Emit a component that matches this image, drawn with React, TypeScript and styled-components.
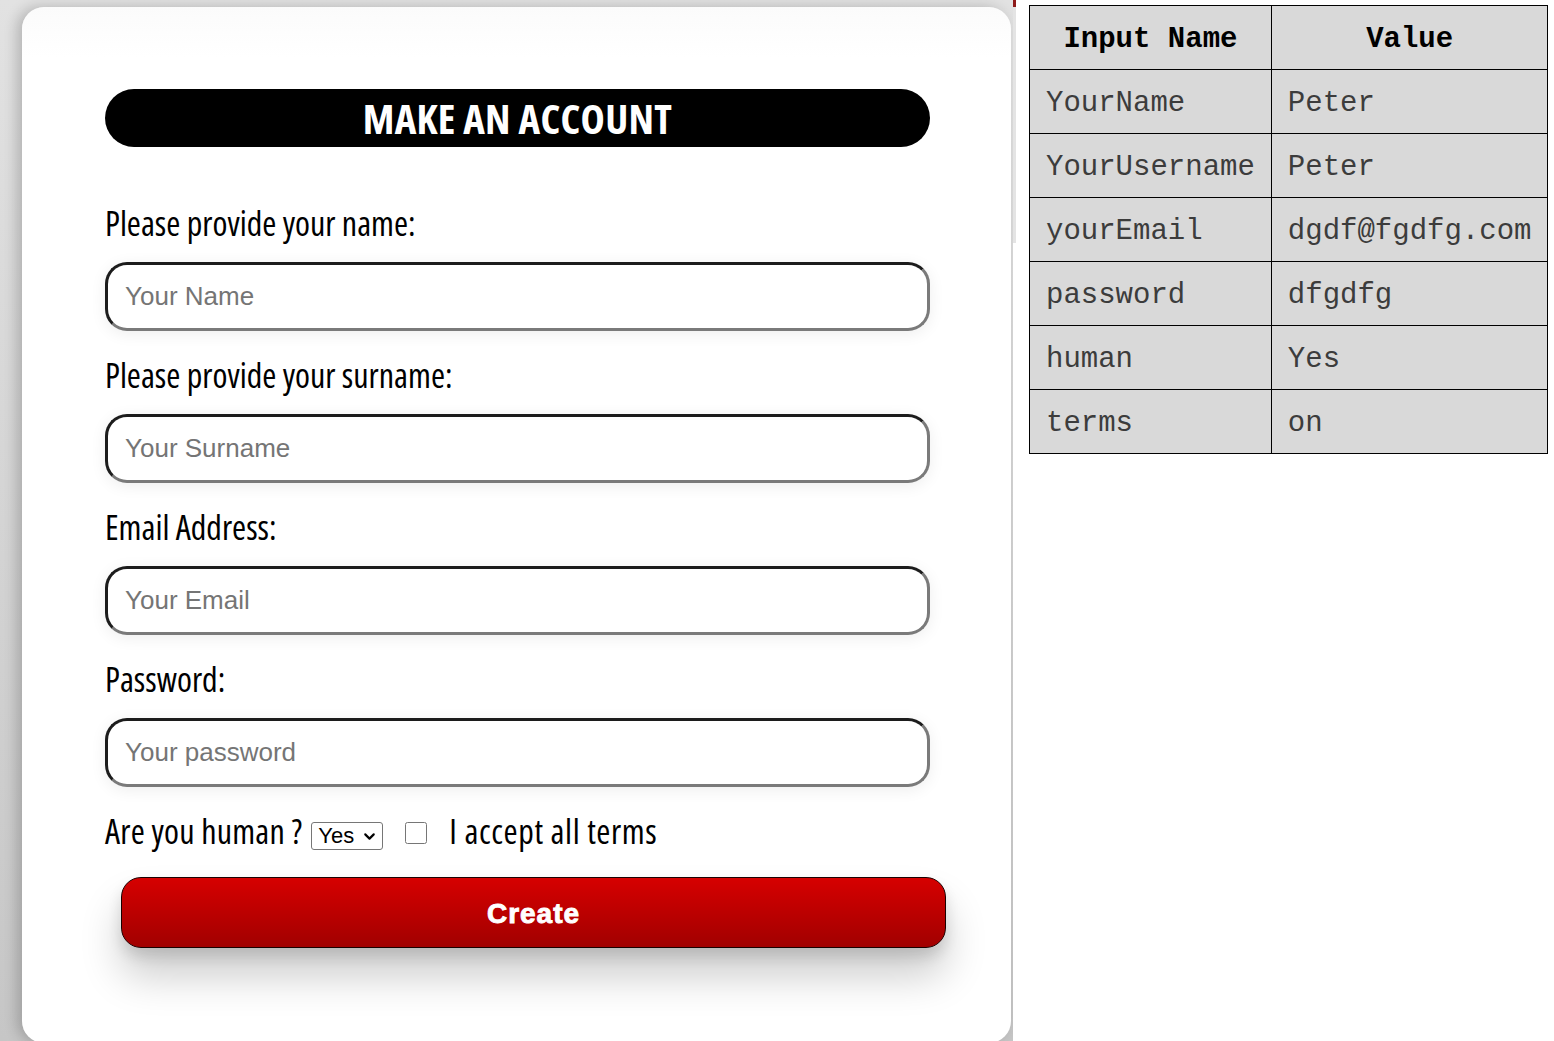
import React from "react";
import styled, { createGlobalStyle } from "styled-components";
import { ChevronDown } from "lucide-react";

const GlobalStyle = createGlobalStyle`
  html, body { margin: 0; padding: 0; background: #fff; }
  body { font-family: "Liberation Sans", Arial, sans-serif; }
  * { box-sizing: border-box; }
`;

const Page = styled.div`
  display: flex;
  align-items: flex-start;
  height: 1041px;
  overflow: hidden;
`;

const FormPane = styled.div`
  position: relative;
  width: 1013px;
  height: 1041px;
  flex-shrink: 0;
  padding: 7px 2px 0 22px;
  background: linear-gradient(to bottom, #e2e2e2, #c6c6c6);
  overflow: hidden;
`;

const Card = styled.form`
  width: 989px;
  height: 1036px;
  padding: 82px 81px 0 83px;
  background: linear-gradient(to bottom, #fbfbfb, #ffffff 50px);
  border-radius: 22px;
  box-shadow: -5px 0 14px rgba(0, 0, 0, 0.2);
  display: flex;
  flex-direction: column;
  align-items: stretch;
`;

const Title = styled.h1`
  margin: 0 0 54px;
  height: 58px;
  border-radius: 29px;
  background: #000;
  color: #fff;
  text-align: center;
  font-family: "Open Sans", sans-serif;
  font-stretch: 75%;
  font-weight: 700;
  font-size: 41px;
  line-height: 58px;
  letter-spacing: 0.3px;
`;

const Label = styled.label`
  display: block;
  margin: 0 0 17px;
  height: 44px;
  font-family: "Open Sans", sans-serif;
  font-stretch: 75%;
  font-weight: 400;
  font-size: 34px;
  line-height: 44px;
  color: #000;
  white-space: nowrap;
`;

const TextInput = styled.input`
  display: block;
  width: 100%;
  height: 69px;
  margin: 0 0 22px;
  padding: 0 17px;
  border: 3px solid;
  border-color: #1c1c1c #7a7a7a #7a7a7a #1c1c1c;
  border-radius: 22px;
  background: #fff;
  box-shadow: 0 3px 16px rgba(0, 0, 0, 0.07);
  font-family: "Liberation Sans", Arial, sans-serif;
  font-size: 26px;
  color: #222;
  outline: none;
  &::placeholder { color: #757575; }
`;

const OptionsRow = styled.div`
  display: flex;
  align-items: center;
  height: 44px;
  margin: 0 0 24px;
  font-family: "Open Sans", sans-serif;
  font-stretch: 75%;
  font-size: 34px;
  line-height: 44px;
  color: #000;
  white-space: nowrap;
`;

const RowText = styled.span<{ $wide?: boolean }>`
  display: inline-block;
  letter-spacing: ${(p) => (p.$wide ? "0.6px" : "0.2px")};
`;

const SelectWrap = styled.span`
  position: relative;
  display: inline-flex;
  margin: 10px 0 0 9px;
`;

const HumanSelect = styled.select`
  appearance: none;
  -webkit-appearance: none;
  width: 72px;
  height: 28px;
  padding: 0 22px 0 6px;
  border: 1px solid #767676;
  border-radius: 3px;
  background: #fff;
  font-family: "Liberation Sans", Arial, sans-serif;
  font-size: 22px;
  line-height: 26px;
  color: #000;
`;

const SelectArrow = styled.span`
  position: absolute;
  right: 5px;
  top: 6px;
  display: flex;
  pointer-events: none;
  color: #000;
`;

const TermsBox = styled.input`
  width: 22px;
  height: 22px;
  margin: 4px 22px 0 22px;
`;

const CreateButton = styled.button`
  width: 825px;
  height: 71px;
  margin: 0 0 0 16px;
  border: 1px solid #1a0000;
  border-radius: 20px;
  background: linear-gradient(to bottom, #d60000, #a10000);
  color: #fff;
  font-family: "Liberation Sans", Arial, sans-serif;
  font-weight: 700;
  font-size: 28px;
  letter-spacing: 1px;
  -webkit-text-stroke: 0.9px #fff;
  padding-top: 3px;
  box-shadow: 0 8px 14px rgba(0, 0, 0, 0.12), 0 28px 42px rgba(0, 0, 0, 0.2);
  cursor: pointer;
`;

const Splitter = styled.div`
  flex-shrink: 0;
  width: 3px;
  height: 243px;
  background: linear-gradient(to bottom, #8e1a1a 0, #8e1a1a 7px, #e4e4e4 7px);
`;

const DataTable = styled.table`
  margin: 5px 0 0 13px;
  border-collapse: collapse;
  border: 1px solid #000;
  background: #d9d9d9;
  font-family: "Liberation Mono", "Courier New", monospace;
  font-size: 29px;
`;

const HeadCell = styled.th`
  height: 64px;
  padding: 4px 16px 0;
  border: 1px solid #000;
  font-weight: 700;
  text-align: center;
  color: #000;
`;

const Cell = styled.td`
  height: 64px;
  padding: 4px 16px 0;
  border: 1px solid #000;
  text-align: left;
  color: #3c3c3c;
  white-space: nowrap;
`;

const rows: [string, string][] = [
  ["YourName", "Peter"],
  ["YourUsername", "Peter"],
  ["yourEmail", "dgdf@fgdfg.com"],
  ["password", "dfgdfg"],
  ["human", "Yes"],
  ["terms", "on"],
];

const fields = [
  { label: "Please provide your name:", placeholder: "Your Name", type: "text" },
  { label: "Please provide your surname:", placeholder: "Your Surname", type: "text" },
  { label: "Email Address:", placeholder: "Your Email", type: "email" },
  { label: "Password:", placeholder: "Your password", type: "password" },
];

export default function App() {
  return (
    <>
      <GlobalStyle />
      <Page>
        <FormPane>
          <Card onSubmit={(e) => e.preventDefault()}>
            <Title>MAKE AN ACCOUNT</Title>
            {fields.map((f) => (
              <React.Fragment key={f.label}>
                <Label>{f.label}</Label>
                <TextInput type={f.type} placeholder={f.placeholder} />
              </React.Fragment>
            ))}
            <OptionsRow>
              <RowText>Are you human ?</RowText>
              <SelectWrap>
                <HumanSelect defaultValue="Yes">
                  <option>Yes</option>
                  <option>No</option>
                </HumanSelect>
                <SelectArrow>
                  <ChevronDown size={17} strokeWidth={3} />
                </SelectArrow>
              </SelectWrap>
              <TermsBox type="checkbox" />
              <RowText $wide>I accept all terms</RowText>
            </OptionsRow>
            <CreateButton type="submit">Create</CreateButton>
          </Card>
        </FormPane>
        <Splitter />
        <DataTable>
          <thead>
            <tr>
              <HeadCell>Input Name</HeadCell>
              <HeadCell>Value</HeadCell>
            </tr>
          </thead>
          <tbody>
            {rows.map(([k, v]) => (
              <tr key={k}>
                <Cell>{k}</Cell>
                <Cell>{v}</Cell>
              </tr>
            ))}
          </tbody>
        </DataTable>
      </Page>
    </>
  );
}
